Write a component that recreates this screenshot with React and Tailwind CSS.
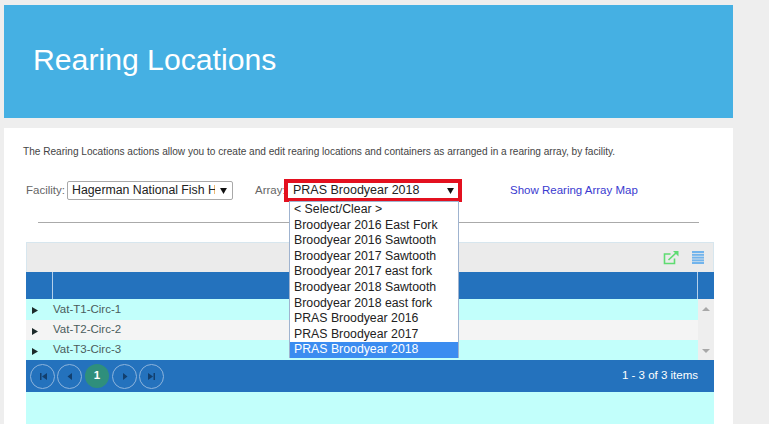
const font = { fontFamily: '"Liberation Sans", Arial, sans-serif' };

const options = [
  "< Select/Clear >",
  "Broodyear 2016 East Fork",
  "Broodyear 2016 Sawtooth",
  "Broodyear 2017 Sawtooth",
  "Broodyear 2017 east fork",
  "Broodyear 2018 Sawtooth",
  "Broodyear 2018 east fork",
  "PRAS Broodyear 2016",
  "PRAS Broodyear 2017",
];

function Caret() {
  return (
    <svg width="7" height="6" viewBox="0 0 8 7" className="shrink-0">
      <path d="M0 0H8L4 7Z" fill="#111" />
    </svg>
  );
}

function RowArrow() {
  return (
    <div className="w-[27px] shrink-0 flex justify-start pl-[6px] pt-[2px]">
      <svg width="6" height="7" viewBox="0 0 6 7">
        <path d="M0 0L6 3.5L0 7Z" fill="#1c2a2a" />
      </svg>
    </div>
  );
}

function Row({ bg, label, h, pad }) {
  return (
    <div className={`flex items-center text-[11.5px] text-[#4a5c5c] ${bg} ${h}`}>
      <RowArrow />
      <span className={pad}>{label}</span>
    </div>
  );
}

function PageBtn({ d, bar }) {
  return (
    <div className="w-[25px] h-[25px] rounded-full border border-[#8db4dc] flex items-center justify-center">
      <svg width="10" height="9" viewBox="0 0 10 9">
        <path d={d} fill="#123f6e" />
        {bar ? <path d={bar} fill="#123f6e" /> : null}
      </svg>
    </div>
  );
}

export default function App() {
  return (
    <div className="h-[424px] w-[769px] overflow-hidden bg-[#eeeeee] pl-1 pt-[5px]" style={font}>
      <div className="w-[729px]">
        <div className="h-[113px] bg-[#45b0e3] flex items-center pl-[29px]">
          <h1 className="text-[30.2px] text-white leading-none pb-[3px]">Rearing Locations</h1>
        </div>
        <div className="relative mt-[10px] h-[296px] bg-white">
          <p className="pl-[19px] pt-[18px] text-[10.1px] leading-[12px] text-[#444]">
            The Rearing Locations actions allow you to create and edit rearing locations and containers as arranged in a rearing array, by facility.
          </p>
          <div className="flex items-center pl-[22px] mt-[21px] h-[23px] text-[11.5px] text-[#666]">
            <span className="w-[41px]">Facility:</span>
            <div className="w-[166px] h-[19px] border border-[#a9a9a9] rounded-[2px] flex items-center justify-between pl-[4px] pr-[5px] text-[12.3px] text-[#222] bg-white">
              <span className="overflow-hidden whitespace-nowrap w-[143px]">Hagerman National Fish Hatchery</span>
              <Caret />
            </div>
            <span className="ml-[22px] w-[29px]">Array:</span>
            <div className="w-[178px] h-[23px] border-[4px] border-[#e3101f] flex items-center justify-between pl-[5px] pr-[4px] text-[12.5px] text-[#222] bg-white">
              <span>PRAS Broodyear 2018</span>
              <Caret />
            </div>
            <a className="ml-[48px] text-[#3a3ad0]">Show Rearing Array Map</a>
          </div>
          <div className="mx-[34px] mt-[20px] h-[1px] bg-[#aaaaaa]" />
          <div className="mx-[22px] mt-[19px] w-[688px] h-[182px] bg-[#c2fffb]">
            <div className="h-[30px] bg-[#ebebeb] border border-[#d7e6ee] border-b-0 flex items-center justify-end pr-[9px] gap-[12px]">
              <svg width="17" height="15" viewBox="0 0 16 15" fill="none" stroke="#5fdc72" strokeWidth="1.6">
                <path d="M11 8.5V13.5H1V4H7" />
                <path d="M5 10L13.5 2" />
                <path d="M9.5 1H15V6.5Z" fill="#5fdc72" stroke="none" />
              </svg>
              <svg width="12" height="13" viewBox="0 0 12 13" fill="#72b4ec">
                <rect y="0" width="12" height="2" />
                <rect y="2.8" width="12" height="2" />
                <rect y="5.6" width="12" height="2" />
                <rect y="8.4" width="12" height="2" />
                <rect y="11" width="12" height="2" />
              </svg>
            </div>
            <div className="h-[27px] bg-[#2472bd] flex">
              <div className="w-[27px] border-r border-[#b5d0ea]" />
              <div className="flex-1 border-r border-[#b5d0ea]" />
              <div className="w-[16px]" />
            </div>
            <div className="flex h-[61px]">
              <div className="flex-1 flex flex-col">
                <Row bg="bg-[#c2fffb]" label="Vat-T1-Circ-1" h="h-[21px]" pad="pt-[1px]" />
                <Row bg="bg-[#f4f4f4]" label="Vat-T2-Circ-2" h="h-[20px]" pad="pb-[1px]" />
                <Row bg="bg-[#c2fffb]" label="Vat-T3-Circ-3" h="h-[20px]" pad="pb-[1px]" />
              </div>
              <div className="w-[16px] bg-[#eeeeee] flex flex-col items-center justify-between pt-[8px] pb-[7px]">
                <svg width="8" height="4" viewBox="0 0 8 4"><path d="M0 4L4 0L8 4Z" fill="#a8a8a8" /></svg>
                <svg width="8" height="4" viewBox="0 0 8 4"><path d="M0 0L8 0L4 4Z" fill="#a8a8a8" /></svg>
              </div>
            </div>
            <div className="h-[32px] bg-[#2472bd] flex items-center justify-between pl-[4px] pr-[16px]">
              <div className="flex items-center gap-[2px]">
                <PageBtn d="M9 1V8L4 4.5Z" bar="M2 1H3.5V8H2Z" />
                <PageBtn d="M7 1V8L2.5 4.5Z" />
                <div className="w-[24px] h-[24px] mx-[1px] rounded-full bg-[#2f8f7c] text-white text-[11.5px] font-bold flex items-center justify-center">1</div>
                <PageBtn d="M3 1V8L7.5 4.5Z" />
                <PageBtn d="M1 1V8L6 4.5Z" bar="M6.5 1H8V8H6.5Z" />
              </div>
              <span className="text-[11.5px] text-white">1 - 3 of 3 items</span>
            </div>
          </div>
          <div className="absolute left-[285px] top-[73px] w-[170px] h-[157px] bg-white border border-[#9fb3cf] text-[12.3px] leading-[15.6px] text-[#222]">
            {options.map((o) => (
              <div key={o} className="pl-[4px] whitespace-nowrap">{o}</div>
            ))}
            <div className="pl-[4px] bg-[#3b8cf0] text-white">PRAS Broodyear 2018</div>
          </div>
        </div>
      </div>
    </div>
  );
}
